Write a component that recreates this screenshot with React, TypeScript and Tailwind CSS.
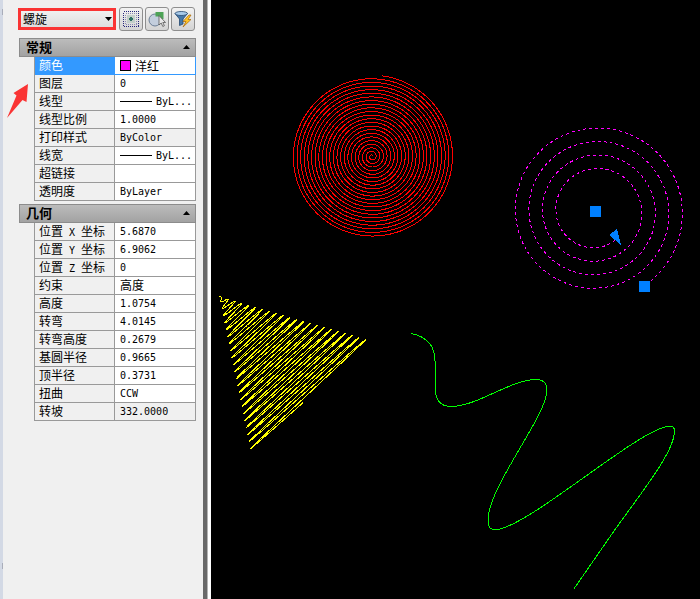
import React, { useState } from 'react';

interface Property {
    label: string;
    value: string;
    kind?: 'color' | 'line';
    readOnly?: boolean;
}

const GENERAL: Property[] = [
    { label: '颜色', value: '洋红', kind: 'color' },
    { label: '图层', value: '0' },
    { label: '线型', value: 'ByL...', kind: 'line' },
    { label: '线型比例', value: '1.0000' },
    { label: '打印样式', value: 'ByColor', readOnly: true },
    { label: '线宽', value: 'ByL...', kind: 'line' },
    { label: '超链接', value: '' },
    { label: '透明度', value: 'ByLayer' },
];

const GEOMETRY: Property[] = [
    { label: '位置 X 坐标', value: '5.6870' },
    { label: '位置 Y 坐标', value: '6.9062' },
    { label: '位置 Z 坐标', value: '0' },
    { label: '约束', value: '高度' },
    { label: '高度', value: '1.0754' },
    { label: '转弯', value: '4.0145' },
    { label: '转弯高度', value: '0.2679' },
    { label: '基圆半径', value: '0.9665' },
    { label: '顶半径', value: '0.3731' },
    { label: '扭曲', value: 'CCW' },
    { label: '转坡', value: '332.0000', readOnly: true },
];

type Point = [number, number];

const toPath = (points: Point[]) =>
    points.map(([x, y], i) => `${i ? 'L' : 'M'}${x.toFixed(2)} ${y.toFixed(2)}`).join('');

// Angles in degrees, clockwise on screen
function spiral(cx: number, cy: number, r0: number, r1: number, start: number, sweep: number) {
    const points: Point[] = [];
    const steps = Math.round(Math.abs(sweep) / 4);
    for (let i = 0; i <= steps; i++) {
        const t = i / steps;
        const a = ((start + sweep * t) * Math.PI) / 180;
        const r = r0 + (r1 - r0) * t;
        points.push([cx + r * Math.cos(a), cy + r * Math.sin(a)]);
    }
    return toPath(points);
}

// Conical helix seen from the side
function cone(turns: number) {
    const points: Point[] = [];
    const steps = 1800;
    for (let i = 0; i <= steps; i++) {
        const u = i / steps;
        const s = u * Math.sin(2 * Math.PI * turns * u);
        points.push([8.5 + 91.3 * u + 59.9 * s, 296.5 + 99.1 * u - 54.6 * s]);
    }
    return toPath(points);
}

const SPLINE = [
    'M200.5 333.5C212 336 224 343 224 361L224 386C224 399 229 406.5 240 406.5',
    'C266 406.5 300 379.5 325 379.5C332 379.5 336 383 336 390',
    'C336 416 277 487 277 520C277 527 279 529.7 284 529.7',
    'C315 529.7 430 426.2 459 426.2C462 426.2 463.5 428 463.5 431',
    'C463.5 452 430 493 402.5 531.7L362.5 589.5',
].join('');

function Drawing() {
    return (
        <svg width="489" height="599" viewBox="0 0 489 599" fill="none" shapeRendering="crispEdges" aria-label="drawing">
            <path d={spiral(161, 156.5, 0.5, 81.3, 0, -22.23 * 360)} stroke="#ff0000" />
            <path d={spiral(384.5, 211.5, 34.9, 89, 55.5, 1441)} stroke="#ff00ff" strokeDasharray="3 3" />
            <path d={cone(21.98)} stroke="#ffff00" />
            <path d={SPLINE} stroke="#00ff00" />
            <g fill="#0080ff">
                <rect x="379" y="206" width="11" height="11" />
                <rect x="428" y="281" width="11" height="11" />
                <path d="M398 235l8 -6l4 16z" />
            </g>
        </svg>
    );
}

function PropertyText({ text }: { text: string }) {
    return (
        <>
            {text.split(/([\x20-\x7e]+)/).filter(Boolean).map((part, i) =>
                /[\x20-\x7e]/.test(part)
                    ? <span key={i} className="font-['DejaVu_Sans_Mono',monospace] text-[10px] whitespace-pre">{part}</span>
                    : <span key={i}>{part}</span>
            )}
        </>
    );
}

interface SectionProps {
    title: string;
    rows: Property[];
    selected: string;
    onSelect: (label: string) => void;
}

function Section({ title, rows, selected, onSelect }: SectionProps) {
    const [open, setOpen] = useState(true);

    return (
        <section>
            <button
                onClick={() => setOpen(!open)}
                aria-expanded={open}
                className="flex h-[19px] w-full items-center justify-between border border-[#8c8c8c] bg-linear-to-b from-[#bcbcbc] to-[#a2a2a2] pr-[5px] pb-0.5 pl-1.5 text-[13px] leading-4 font-bold"
            >
                {title}
                <svg width="7" height="4" viewBox="0 0 7 4" className={open ? '' : 'rotate-180'}><path d="M3.5 0L7 4H0z" /></svg>
            </button>
            {open && (
                <div className="pl-[15px]">
                    <table className="w-full table-fixed border-separate border-spacing-0 border-l border-[#999]">
                        <tbody>
                            {rows.map(row => {
                                const active = row.label === selected;
                                return (
                                    <tr key={row.label} onClick={() => onSelect(row.label)} className="h-[18px]">
                                        <th
                                            scope="row"
                                            className={`h-[18px] w-20 border-r border-b p-0 pl-1 text-left font-normal whitespace-nowrap ${active ? 'border-[#3399ff] bg-[#3399ff] text-white' : 'border-[#999]'}`}
                                        >
                                            <div className="h-[17px] leading-[15px]"><PropertyText text={row.label} /></div>
                                        </th>
                                        <td
                                            className={`h-[18px] border-r border-b p-0 pl-1 whitespace-nowrap ${active ? 'border-[#3399ff]' : 'border-[#999]'} ${row.readOnly ? '' : 'bg-white'}`}
                                        >
                                            <div className="flex h-[17px] items-center pl-px leading-[15px]">
                                                {row.kind === 'color' && <span className="mr-1 size-[11px] border border-black bg-[#ff00ff]" />}
                                                {row.kind === 'line' && <span className="mr-1 h-px w-8 bg-black" />}
                                                <span className={row.kind === 'color' ? '' : 'pb-0.5'}><PropertyText text={row.value} /></span>
                                            </div>
                                        </td>
                                    </tr>
                                );
                            })}
                        </tbody>
                    </table>
                </div>
            )}
        </section>
    );
}

const toolClass = 'flex size-6 shrink-0 items-center justify-center rounded-[3px] border border-[#8e8e8e] bg-linear-to-b from-[#f2f2f2] to-[#d4d4d4]';

function Toolbar() {
    return (
        <div className="flex items-center gap-0.5">
            <div className="relative mr-px h-[22px] min-w-0 flex-1">
                <select
                    aria-label="对象类型"
                    className="block h-full w-full appearance-none border-3 border-[#fa3434] bg-linear-to-b from-[#f0f0f0] to-[#dedede] pl-0.5 text-[12px] leading-4"
                >
                    <option>螺旋</option>
                </select>
                <svg width="7" height="4" viewBox="0 0 7 4" className="pointer-events-none absolute top-[9px] right-1"><path d="M0 0h7L3.5 4z" /></svg>
            </div>
            <button className={toolClass} title="切换 PICKADD">
                <svg width="18" height="18" viewBox="0 0 18 18" shapeRendering="crispEdges" fill="none">
                    <path d="M1.5 1.5h15v15h-15z" stroke="#26267c" strokeDasharray="1 1" />
                    <path d="M3.5 3.5h11v11h-11z" stroke="#8c8cb4" strokeDasharray="1 1" />
                    <path d="M5 5h8v8H5z" fill="#c3cfca" />
                    <path d="M9 7v4M7 9h4" stroke="#2c6f62" strokeWidth="2" />
                </svg>
            </button>
            <button className={toolClass} title="选择对象">
                <svg width="18" height="18" viewBox="0 0 18 18">
                    <circle cx="7" cy="10" r="6" fill="#c3cedd" stroke="#6d7f96" />
                    <path d="M7.5 2h8v7h-3l-1-2.5h-4z" fill="#4da356" />
                    <path d="M11 5.5v9.5l2.2-2 1.6 3.5 1.6-.8-1.6-3.2h2.7z" fill="#e8e8e8" stroke="#555" strokeWidth=".8" />
                </svg>
            </button>
            <button className={toolClass} title="快速选择">
                <svg width="18" height="18" viewBox="0 0 18 18">
                    <path d="M1 3.5L5.5 9v6.5l3.500-1.500V9l4.500-5.500z" fill="#4477a8" stroke="#24476e" strokeWidth=".8" />
                    <ellipse cx="7.25" cy="3.5" rx="6.2" ry="2" fill="#a9cbea" stroke="#24476e" strokeWidth=".8" />
                    <path d="M15 5l-6 6.500h3l-3 5.500 8-7.500h-3l3-4.500z" fill="#ffc526" stroke="#a86708" strokeWidth=".7" />
                </svg>
            </button>
        </div>
    );
}

export default function App() {
    const [selected, setSelected] = useState('颜色');

    return (
        <div className="flex min-h-screen bg-[#f0f0f0] font-['Noto_Sans_CJK_SC',sans-serif] text-[12px] text-black">
            <aside className="relative w-[211px] shrink-0 border-l-3 border-[#d3d9e5] pr-[15px] pl-[15px]">
                <div className="pt-[7px] pr-px">
                    <Toolbar />
                </div>
                <div className="mt-[7px] flex flex-col gap-[3px] pl-px">
                    <Section title="常规" rows={GENERAL} selected={selected} onSelect={setSelected} />
                    <Section title="几何" rows={GEOMETRY} selected={selected} onSelect={setSelected} />
                </div>
                <svg width="22" height="34" viewBox="0 0 22 34" className="pointer-events-none absolute top-[84px] left-1">
                    <path d="M21 0L6.5 9l3 2.5L0 34l15.5-18 4 2z" fill="#fa3434" />
                </svg>
                <div className="absolute top-[9px] -left-px h-1.5 w-px bg-[#a9adba]" />
                <div className="absolute bottom-[30px] -left-px h-1.5 w-px bg-[#a9adba]" />
                <div className="absolute inset-y-0 right-0 flex w-2">
                    <div className="w-1 bg-[#696969]" />
                    <div className="w-px bg-[#b4b4b4]" />
                    <div className="flex-1 bg-white" />
                </div>
            </aside>
            <main className="min-w-0 flex-1 overflow-hidden bg-black">
                <Drawing />
            </main>
        </div>
    );
}
